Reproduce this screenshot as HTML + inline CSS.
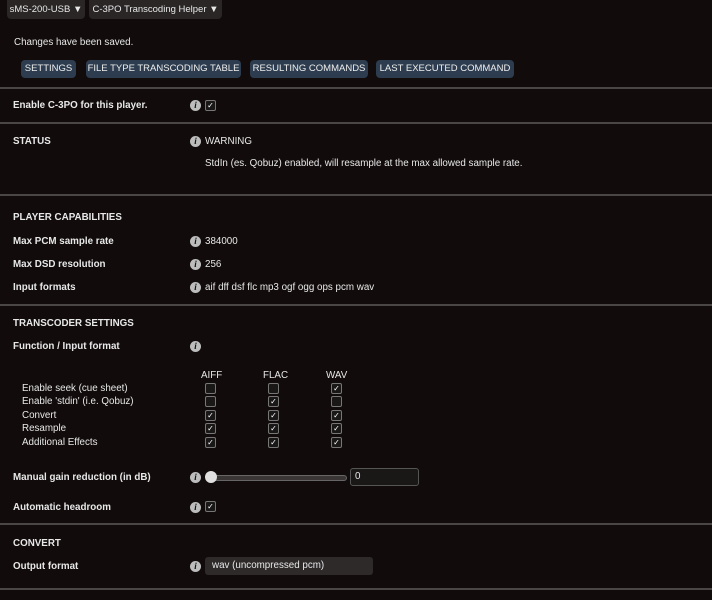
<!DOCTYPE html><html><head><style>
body{margin:0;width:712px;height:600px;overflow:hidden;background:#110b0b;font-family:"Liberation Sans",sans-serif;font-size:9.8px;color:#e8e8e8;position:relative}
.a{position:absolute;white-space:nowrap}
.b{font-weight:bold}
.dd{position:absolute;top:0;height:19px;background:#2a2626;border-radius:0 0 4px 4px;line-height:19px;font-size:9.5px;white-space:nowrap;text-align:center}
.btn{position:absolute;top:60px;height:18px;line-height:18px;background:#2d3d4f;border-radius:4px;font-size:9.5px;color:#eee;text-align:center;white-space:nowrap}
.hr{position:absolute;left:0;width:712px;height:2px;background:#4a4646}
.i{position:absolute;width:11px;height:11px;border-radius:50%;background:#bdbdbd;color:#111;font:bold italic 9px "Liberation Serif",serif;text-align:center;line-height:11px}
.cb{position:absolute;width:9px;height:9px;border:1px solid #777;border-radius:2px;background:#1a1717;font-size:8px;line-height:9px;text-align:center;color:#fff}
</style></head><body>
<div class="dd" style="left:7px;width:78px">sMS-200-USB ▼</div>
<div class="dd" style="left:89px;width:133px">C-3PO Transcoding Helper ▼</div>
<div class="a" style="left:14px;top:37px">Changes have been saved.</div>
<div class="btn" style="left:21px;width:55px">SETTINGS</div>
<div class="btn" style="left:86px;width:155px">FILE TYPE TRANSCODING TABLE</div>
<div class="btn" style="left:250px;width:118px">RESULTING COMMANDS</div>
<div class="btn" style="left:376px;width:138px">LAST EXECUTED COMMAND</div>
<div class="hr" style="top:87px"></div>
<div class="a b" style="left:13px;top:100px">Enable C-3PO for this player.</div>
<div class="i" style="left:190px;top:100px">i</div><div class="cb" style="left:205px;top:100px">✓</div>
<div class="hr" style="top:122px"></div>
<div class="a b" style="left:13px;top:136px">STATUS</div>
<div class="i" style="left:190px;top:136px">i</div><div class="a" style="left:205px;top:136px">WARNING</div>
<div class="a" style="left:205px;top:158px">StdIn (es. Qobuz) enabled, will resample at the max allowed sample rate.</div>
<div class="hr" style="top:194px"></div>
<div class="a b" style="left:13px;top:212px">PLAYER CAPABILITIES</div>
<div class="a b" style="left:13px;top:236px">Max PCM sample rate</div><div class="i" style="left:190px;top:236px">i</div><div class="a" style="left:205px;top:236px">384000</div>
<div class="a b" style="left:13px;top:259px">Max DSD resolution</div><div class="i" style="left:190px;top:259px">i</div><div class="a" style="left:205px;top:259px">256</div>
<div class="a b" style="left:13px;top:282px">Input formats</div><div class="i" style="left:190px;top:282px">i</div><div class="a" style="left:205px;top:282px">aif dff dsf flc mp3 ogf ogg ops pcm wav</div>
<div class="hr" style="top:304px"></div>
<div class="a b" style="left:13px;top:318px">TRANSCODER SETTINGS</div>
<div class="a b" style="left:13px;top:341px">Function / Input format</div><div class="i" style="left:190px;top:341px">i</div>
<div class="a" style="left:201px;top:370px">AIFF</div><div class="a" style="left:263px;top:370px">FLAC</div><div class="a" style="left:326px;top:370px">WAV</div>
<div class="a" style="left:22px;top:383px">Enable seek (cue sheet)</div>
<div class="a" style="left:22px;top:396px">Enable 'stdin' (i.e. Qobuz)</div>
<div class="a" style="left:22px;top:410px">Convert</div>
<div class="a" style="left:22px;top:423px">Resample</div>
<div class="a" style="left:22px;top:437px">Additional Effects</div>
<div class="cb" style="left:205px;top:383px"></div><div class="cb" style="left:268px;top:383px"></div><div class="cb" style="left:331px;top:383px">✓</div>
<div class="cb" style="left:205px;top:396px"></div><div class="cb" style="left:268px;top:396px">✓</div><div class="cb" style="left:331px;top:396px"></div>
<div class="cb" style="left:205px;top:410px">✓</div><div class="cb" style="left:268px;top:410px">✓</div><div class="cb" style="left:331px;top:410px">✓</div>
<div class="cb" style="left:205px;top:423px">✓</div><div class="cb" style="left:268px;top:423px">✓</div><div class="cb" style="left:331px;top:423px">✓</div>
<div class="cb" style="left:205px;top:437px">✓</div><div class="cb" style="left:268px;top:437px">✓</div><div class="cb" style="left:331px;top:437px">✓</div>
<div class="a b" style="left:13px;top:472px">Manual gain reduction (in dB)</div><div class="i" style="left:190px;top:472px">i</div>
<div style="position:absolute;left:207px;top:475px;width:138px;height:4px;background:#3a3636;border:1px solid #666;border-radius:3px"></div>
<div style="position:absolute;left:205px;top:471px;width:12px;height:12px;border-radius:50%;background:#e0e0e0"></div>
<div style="position:absolute;left:350px;top:468px;width:63px;height:16px;border:1px solid #555;border-radius:3px;background:#1a1717;line-height:16px;padding-left:4px">0</div>
<div class="a b" style="left:13px;top:502px">Automatic headroom</div><div class="i" style="left:190px;top:502px">i</div><div class="cb" style="left:205px;top:501px">✓</div>
<div class="hr" style="top:523px"></div>
<div class="a b" style="left:13px;top:538px">CONVERT</div>
<div class="a b" style="left:13px;top:561px">Output format</div><div class="i" style="left:190px;top:561px">i</div>
<div style="position:absolute;left:205px;top:557px;width:168px;height:18px;background:#2e2a2a;border-radius:3px;line-height:18px;padding-left:7px;box-sizing:border-box">wav (uncompressed pcm)</div>
<div class="hr" style="top:588px"></div>
</body></html>
